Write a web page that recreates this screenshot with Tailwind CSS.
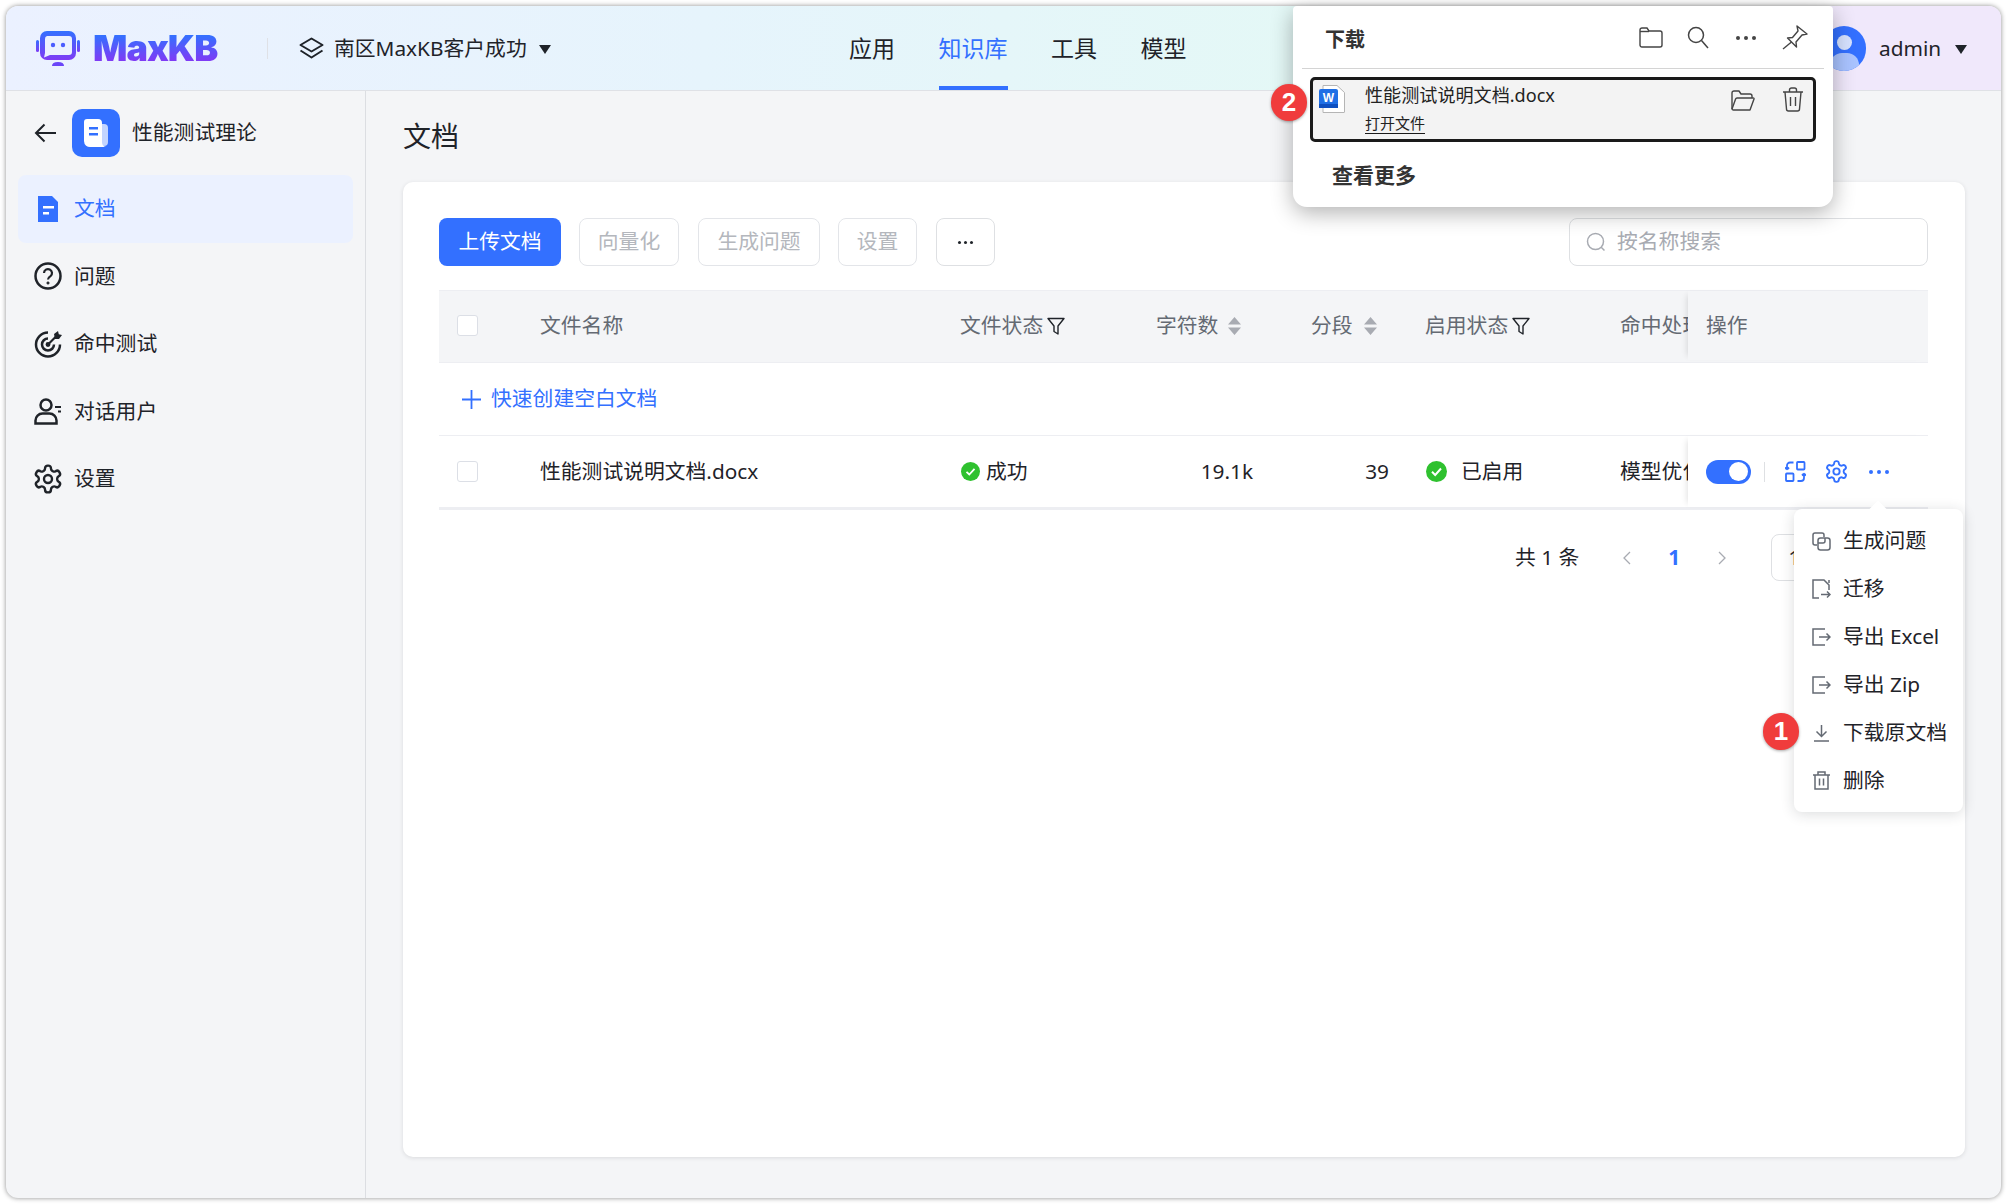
<!DOCTYPE html>
<html lang="zh-CN">
<head>
    <meta charset="UTF-8">
    <title>MaxKB 文档</title>
    <script src="https://cdn.jsdelivr.net/npm/@tailwindcss/browser@4"></script>
</head>
<body class="bg-white font-['Noto_Sans','Noto_Sans_CJK_SC',sans-serif] text-[20.8px] text-[#1f2329]">
<div class="relative w-[2007px] h-[1204px] p-[6px] overflow-hidden">

    <!-- Window -->
    <div class="flex flex-col h-full rounded-[12px] overflow-hidden bg-[#f4f5f7] shadow-[0_0_5px_rgba(0,0,0,0.45)]">

        <!-- Header -->
        <header class="relative flex items-center shrink-0 h-[85px] border-b border-[#dfe1e6] bg-[linear-gradient(90deg,#ebf1ff_0%,#e6f4fc_35%,#e4f8f6_65%,#e9f1f7_78%,#f0e8fb_92%,#f0e8fb_100%)]">
            <svg class="ml-[30px] w-[44px] h-[35px]" viewBox="0 0 44 35">
                <defs>
                    <linearGradient id="logoGrad" x1="0" y1="0" x2="0" y2="1">
                        <stop offset="0" stop-color="#3370ff"/>
                        <stop offset="1" stop-color="#7f3bf5"/>
                    </linearGradient>
                </defs>
                <rect x="0" y="9" width="3" height="12" rx="1.5" fill="url(#logoGrad)"/>
                <rect x="41" y="9" width="3" height="12" rx="1.5" fill="url(#logoGrad)"/>
                <rect x="4" y="0" width="36" height="29" rx="7" fill="url(#logoGrad)"/>
                <path d="M11 5h22a3 3 0 0 1 3 3v13a3 3 0 0 1-3 3H14l-6 2.5 1-4.5V8a3 3 0 0 1 2-3z" fill="#ebf1ff"/>
                <circle cx="17" cy="14" r="2.2" fill="#4a5cff"/>
                <circle cx="27" cy="14" r="2.2" fill="#4a5cff"/>
                <path d="M16 35q0-4 6-4t6 4z" fill="#6a45f8"/>
            </svg>
            <span class="ml-[13px] w-[126px] font-['Inter',sans-serif] text-[36px] font-black leading-none tracking-[-1px] bg-[linear-gradient(180deg,#3370ff_15%,#7f3bf5_85%)] bg-clip-text text-transparent">MaxKB</span>
            <span class="ml-[48px] w-px h-[21px] bg-[#dfe1e6]"></span>
            <svg class="ml-[31px] w-[25px] h-[22px]" viewBox="0 0 25 22" fill="none" stroke="#1f2329" stroke-width="2" stroke-linejoin="round">
                <path d="M12.5 1.5 23.5 8 12.5 14.5 1.5 8z"/>
                <path d="M1.5 13.5 12.5 20.5 23.5 13.5"/>
            </svg>
            <span class="ml-[10px] mt-[2px] w-[195px] whitespace-nowrap">南区MaxKB客户成功</span>
            <span class="ml-[10px] mt-[2px] w-0 h-0 border-x-[6.5px] border-x-transparent border-t-[9px] border-t-[#1f2329]"></span>

            <nav class="absolute left-[843px] top-0 h-full flex gap-[43.5px] text-[23px]">
                <a class="flex items-center">应用</a>
                <a class="flex items-center text-[#3370ff] border-b-[4px] border-[#3370ff] pt-[4px]">知识库</a>
                <a class="flex items-center">工具</a>
                <a class="flex items-center">模型</a>
            </nav>

            <div class="absolute left-[1816px] top-[20px] w-[44px] h-[45px] rounded-full bg-[#3370ff] overflow-hidden">
                <span class="absolute left-[15px] top-[9px] w-[15px] h-[15px] rounded-full bg-[#d6e2ff]"></span>
                <span class="absolute left-[8px] top-[27px] w-[29px] h-[22px] rounded-t-[12px] bg-[#a9c3ff]"></span>
            </div>
            <span class="absolute left-[1873px] top-[27px]">admin</span>
            <span class="absolute left-[1949px] top-[39px] w-0 h-0 border-x-[6.5px] border-x-transparent border-t-[9px] border-t-[#1f2329]"></span>
        </header>

        <div class="flex flex-1 min-h-0">

            <!-- Sidebar -->
            <aside class="w-[360px] shrink-0 border-r border-[#dcdee2] pt-[18px]">
                <div class="flex items-center h-[48px]">
                    <svg class="ml-[28px] w-[23px] h-[20px]" viewBox="0 0 23 20" fill="none" stroke="#1f2329" stroke-width="2">
                        <path d="M22 10H2M10.500 1.500 2 10l8.500 8.500"/>
                    </svg>
                    <div class="ml-[15px] flex items-center justify-center w-[48px] h-[48px] rounded-[10px] bg-[#3370ff]">
                        <svg class="w-[26px] h-[30px]" viewBox="0 0 26 30">
                            <path d="M16 6h5a4 4 0 0 1 4 4v14a4 4 0 0 1-4 4h-5z" fill="#c3d5ff"/>
                            <path d="M4 1h11a4 4 0 0 1 4 4v19a5 5 0 0 0 4 5H8a6 6 0 0 1-7-6V4a3 3 0 0 1 3-3z" fill="#fff"/>
                            <rect x="6" y="9" width="9" height="2.500" fill="#3370ff"/>
                            <rect x="6" y="15" width="9" height="2.500" fill="#3370ff"/>
                        </svg>
                    </div>
                    <span class="ml-[12px]">性能测试理论</span>
                </div>

                <nav class="mt-[18px] ml-[12px] w-[335px]">
                    <a class="flex items-center h-[67.5px] pl-[16px] rounded-[8px] bg-[#ebf1ff] text-[#3370ff]">
                        <svg class="w-[28px] h-[26px]" viewBox="0 0 28 26">
                            <path d="M4 0h14l6 6v20H4z" fill="#3370ff"/>
                            <rect x="9" y="10" width="11" height="2.500" fill="#fff"/>
                            <rect x="9" y="16" width="6" height="2.500" fill="#fff"/>
                        </svg>
                        <span class="ml-[12px]">文档</span>
                    </a>
                    <a class="flex items-center h-[67.500px] pl-[16px]">
                        <svg class="w-[28px] h-[28px]" viewBox="0 0 28 28" fill="none" stroke="#1f2329" stroke-width="2.500">
                            <circle cx="14" cy="14" r="12.500"/>
                            <path d="M10 11a4 4 0 1 1 6.500 3.200c-1.500 1-2.500 1.800-2.500 3.300" stroke-width="2.200"/>
                            <circle cx="14" cy="21" r="1.100" fill="#1f2329" stroke-width="1"/>
                        </svg>
                        <span class="ml-[12px]">问题</span>
                    </a>
                    <a class="flex items-center h-[67.500px] pl-[16px]">
                        <svg class="w-[28px] h-[28px]" viewBox="0 0 28 28" fill="none" stroke="#1f2329" stroke-width="2.500">
                            <path d="M14 2.500A12 12 0 1 0 26 14.500"/>
                            <path d="M14 8.500a6 6 0 1 0 6 6"/>
                            <circle cx="14" cy="14.500" r="1.200" fill="#1f2329"/>
                            <path d="M14 14.500 23 5.500" stroke-width="2.200"/>
                            <path d="M20 4l4-3 .8 3.200L28 5l-3 4h-4z" fill="#1f2329" stroke="none"/>
                        </svg>
                        <span class="ml-[12px]">命中测试</span>
                    </a>
                    <a class="flex items-center h-[67.500px] pl-[16px]">
                        <svg class="w-[28px] h-[27px]" viewBox="0 0 28 27" fill="none" stroke="#1f2329" stroke-width="2.500">
                            <circle cx="12" cy="7" r="5.500"/>
                            <path d="M1.500 25.500v-3a7 7 0 0 1 7-7h7a7 7 0 0 1 7 7v3z"/>
                            <path d="M21 9h6M24 13.500h3" stroke-width="2"/>
                        </svg>
                        <span class="ml-[12px]">对话用户</span>
                    </a>
                    <a class="flex items-center h-[67.500px] pl-[16px]">
                        <svg class="w-[32px] h-[32px] -mx-[2px]" viewBox="0 0 24 24" fill="none" stroke="#1f2329" stroke-width="1.800">
                            <path d="M12.220 2h-.44a2 2 0 0 0-2 2v.18a2 2 0 0 1-1 1.730l-.43.25a2 2 0 0 1-2 0l-.15-.08a2 2 0 0 0-2.730.73l-.22.38a2 2 0 0 0 .73 2.730l.15.1a2 2 0 0 1 1 1.720v.51a2 2 0 0 1-1 1.740l-.15.09a2 2 0 0 0-.73 2.730l.22.38a2 2 0 0 0 2.730.73l.15-.08a2 2 0 0 1 2 0l.43.25a2 2 0 0 1 1 1.730V20a2 2 0 0 0 2 2h.44a2 2 0 0 0 2-2v-.18a2 2 0 0 1 1-1.730l.43-.25a2 2 0 0 1 2 0l.15.08a2 2 0 0 0 2.730-.73l.22-.39a2 2 0 0 0-.73-2.730l-.15-.08a2 2 0 0 1-1-1.740v-.5a2 2 0 0 1 1-1.740l.15-.09a2 2 0 0 0 .73-2.730l-.22-.38a2 2 0 0 0-2.730-.73l-.15.08a2 2 0 0 1-2 0l-.43-.25a2 2 0 0 1-1-1.730V4a2 2 0 0 0-2-2z"/>
                            <circle cx="12" cy="12" r="3"/>
                        </svg>
                        <span class="ml-[12px]">设置</span>
                    </a>
                </nav>
            </aside>

            <!-- Main -->
            <main class="flex flex-col flex-1 min-w-0 pt-[23px] pl-[37px] pr-[36px] pb-[41px]">
                <h1 class="h-[44px] mb-[24px] flex items-center text-[28px]">文档</h1>

                <section class="flex-1 rounded-[10px] bg-white pl-[36px] pr-[37px] pt-[36px] shadow-[0_1px_4px_rgba(31,35,41,0.12)]">
                    <!-- Toolbar -->
                    <div class="flex items-center gap-[18px]">
                        <button class="w-[122px] h-[48px] rounded-[8px] bg-[#3370ff] text-white">上传文档</button>
                        <button class="w-[100px] h-[48px] rounded-[8px] border border-[#e3e5e9] text-[#b4b7bd]">向量化</button>
                        <button class="ml-px w-[122px] h-[48px] rounded-[8px] border border-[#e3e5e9] text-[#b4b7bd]">生成问题</button>
                        <button class="w-[79px] h-[48px] rounded-[8px] border border-[#e3e5e9] text-[#b4b7bd]">设置</button>
                        <button class="ml-px flex items-center justify-center gap-[3px] w-[59px] h-[48px] rounded-[8px] border border-[#dee0e3]">
                            <i class="w-[3px] h-[3px] rounded-full bg-[#1f2329]"></i><i class="w-[3px] h-[3px] rounded-full bg-[#1f2329]"></i><i class="w-[3px] h-[3px] rounded-full bg-[#1f2329]"></i>
                        </button>
                        <div class="ml-auto flex items-center w-[359px] h-[48px] rounded-[8px] border border-[#dee0e3] pl-[16px] text-[#a8abb2]">
                            <svg class="w-[20px] h-[20px]" viewBox="0 0 20 20" fill="none" stroke="#a8abb2" stroke-width="1.500">
                                <circle cx="9.500" cy="9.500" r="8"/><path d="M15 15l3.500 3.500"/>
                            </svg>
                            <span class="ml-[11px]">按名称搜索</span>
                        </div>
                    </div>

                    <!-- Table -->
                    <div class="mt-[24px] text-[#646a73]">
                        <div class="grid grid-cols-[101px_420px_196px_155px_114px_195px_68px_240px] items-center h-[73px] pb-[2px] border-y border-[#edeef2] bg-[#f4f5f7]">
                            <span class="ml-[18px] w-[21px] h-[21px] rounded-[3px] border border-[#dcdfe6] bg-white"></span>
                            <span>文件名称</span>
                            <span class="flex items-center gap-[4px]">文件状态
                                <svg class="w-[18px] h-[18px]" viewBox="0 0 18 18" fill="none" stroke="#1f2329" stroke-width="1.400" stroke-linejoin="round"><path d="M1 1.500h16l-6 7.500v8l-4-2.500V9z"/></svg>
                            </span>
                            <span class="flex items-center gap-[10px]">字符数
                                <svg class="w-[13px] h-[20px]" viewBox="0 0 13 20" fill="#a8abb2"><path d="M6.500 1 13 8.500H0zM6.500 19 0 11.500h13z"/></svg>
                            </span>
                            <span class="flex items-center gap-[11px]">分段
                                <svg class="w-[13px] h-[20px]" viewBox="0 0 13 20" fill="#a8abb2"><path d="M6.500 1 13 8.500H0zM6.500 19 0 11.500h13z"/></svg>
                            </span>
                            <span class="flex items-center gap-[4px]">启用状态
                                <svg class="w-[18px] h-[18px]" viewBox="0 0 18 18" fill="none" stroke="#1f2329" stroke-width="1.400" stroke-linejoin="round"><path d="M1 1.500h16l-6 7.500v8l-4-2.500V9z"/></svg>
                            </span>
                            <span class="overflow-hidden whitespace-nowrap">命中处理方式</span>
                            <span class="flex items-center self-stretch pl-[18px] bg-[#f4f5f7] shadow-[-5px_0_6px_-4px_rgba(0,0,0,0.12)]">操作</span>
                        </div>

                        <div class="flex items-center h-[73px] border-b border-[#edeef2] pl-[23px] text-[#3370ff]">
                            <svg class="w-[19px] h-[19px]" viewBox="0 0 19 19" fill="none" stroke="#3370ff" stroke-width="1.800"><path d="M9.500 0v19M0 9.500h19"/></svg>
                            <span class="ml-[10px]">快速创建空白文档</span>
                        </div>

                        <div class="grid grid-cols-[101px_420px_196px_155px_114px_195px_68px_240px] items-center h-[74px] border-b-[3px] border-[#edeef2] text-[#1f2329]">
                            <span class="ml-[18px] w-[21px] h-[21px] rounded-[3px] border border-[#dcdfe6] bg-white"></span>
                            <span class="whitespace-nowrap">性能测试说明文档.docx</span>
                            <span class="flex items-center gap-[6px]">
                                <svg class="w-[19px] h-[19px] ml-px" viewBox="0 0 19 19"><circle cx="9.500" cy="9.500" r="9.500" fill="#2fc12f"/><path d="M5.500 9.800 8.300 12.500 13.500 6.800" fill="none" stroke="#fff" stroke-width="1.800"/></svg>
                                成功
                            </span>
                            <span class="pr-[58px] text-right">19.1k</span>
                            <span class="pr-[36px] text-right">39</span>
                            <span class="flex items-center">
                                <svg class="w-[21px] h-[21px] ml-px" viewBox="0 0 21 21"><circle cx="10.500" cy="10.500" r="10.500" fill="#2fc12f"/><path d="M6 10.800 9.200 14 15 7.500" fill="none" stroke="#fff" stroke-width="2"/></svg>
                                <span class="ml-[14px]">已启用</span>
                            </span>
                            <span class="overflow-hidden whitespace-nowrap">模型优化</span>
                            <div class="flex items-center self-stretch pl-[18px] bg-white shadow-[-5px_0_6px_-4px_rgba(0,0,0,0.12)]">
                                <span class="flex items-center justify-end w-[45px] h-[24px] pr-[3px] rounded-full bg-[#3370ff]"><i class="w-[19px] h-[19px] rounded-full bg-white"></i></span>
                                <span class="ml-[13px] w-px h-[20px] bg-[#dee0e3]"></span>
                                <svg class="ml-[20px] w-[21px] h-[21px]" viewBox="0 0 21 21" fill="none" stroke="#3370ff" stroke-width="1.800">
                                    <rect x="12" y="1" width="7.500" height="7.500" rx=".8"/>
                                    <rect x="1" y="12.500" width="7.500" height="7.500" rx=".8"/>
                                    <path d="M8.500 1.500H5a3 3 0 0 0-3 3v4M2 8.500 0 6.500M2 8.500l2-2"/>
                                    <path d="M12.500 20H16a3 3 0 0 0 3-3v-4.500M19 12.500l-2 2M19 12.500l2 2"/>
                                </svg>
                                <svg class="ml-[18px] w-[25px] h-[25px]" viewBox="0 0 24 24" fill="none" stroke="#3370ff" stroke-width="1.800">
                                    <path d="M12.220 2h-.44a2 2 0 0 0-2 2v.18a2 2 0 0 1-1 1.730l-.43.25a2 2 0 0 1-2 0l-.15-.08a2 2 0 0 0-2.730.73l-.22.38a2 2 0 0 0 .73 2.730l.15.1a2 2 0 0 1 1 1.720v.51a2 2 0 0 1-1 1.740l-.15.09a2 2 0 0 0-.73 2.730l.22.38a2 2 0 0 0 2.730.73l.15-.08a2 2 0 0 1 2 0l.43.25a2 2 0 0 1 1 1.730V20a2 2 0 0 0 2 2h.44a2 2 0 0 0 2-2v-.18a2 2 0 0 1 1-1.730l.43-.25a2 2 0 0 1 2 0l.15.08a2 2 0 0 0 2.730-.73l.22-.39a2 2 0 0 0-.73-2.730l-.15-.08a2 2 0 0 1-1-1.740v-.5a2 2 0 0 1 1-1.740l.15-.09a2 2 0 0 0 .73-2.730l-.22-.38a2 2 0 0 0-2.730-.73l-.15.08a2 2 0 0 1-2 0l-.43-.25a2 2 0 0 1-1-1.730V4a2 2 0 0 0-2-2z"/>
                                    <circle cx="12" cy="12" r="3"/>
                                </svg>
                                <span class="ml-[20px] flex gap-[4px]"><i class="w-[4px] h-[4px] rounded-full bg-[#3370ff]"></i><i class="w-[4px] h-[4px] rounded-full bg-[#3370ff]"></i><i class="w-[4px] h-[4px] rounded-full bg-[#3370ff]"></i></span>
                            </div>
                        </div>
                    </div>

                    <!-- Pagination -->
                    <div class="flex items-center mt-[24px] h-[47px] text-[#1f2329]">
                        <span class="ml-[1076px] whitespace-nowrap">共 1 条</span>
                        <svg class="ml-[43px] w-[9px] h-[14px]" viewBox="0 0 9 14" fill="none" stroke="#a8abb2" stroke-width="1.300"><path d="M8 1 2 7l6 6"/></svg>
                        <span class="ml-[37px] font-bold text-[#3370ff]">1</span>
                        <svg class="ml-[38px] w-[9px] h-[14px]" viewBox="0 0 9 14" fill="none" stroke="#a8abb2" stroke-width="1.300"><path d="M1 1l6 6-6 6"/></svg>
                        <span class="ml-[44px] flex items-center w-[120px] h-[47px] rounded-[8px] border border-[#dee0e3] pl-[16px] whitespace-nowrap">10 条/页</span>
                    </div>
                </section>
            </main>
        </div>
    </div>

    <!-- Browser download flyout -->
    <div class="absolute left-[1293px] top-[6px] w-[540px] h-[201px] rounded-b-[14px] rounded-t-[4px] bg-white text-[#333] shadow-[0_6px_22px_rgba(0,0,0,0.3)]">
        <div class="flex items-center h-[62px] pl-[32px] pr-[25px]">
            <span class="mt-[6px] font-bold text-[20px]">下载</span>
            <svg class="ml-auto mt-[1px] w-[24px] h-[21px]" viewBox="0 0 24 21" fill="none" stroke="#444" stroke-width="1.400"><path d="M1 3a2 2 0 0 1 2-2h5l2 3h11a2 2 0 0 1 2 2v12a2 2 0 0 1-2 2H3a2 2 0 0 1-2-2z"/><path d="M1 4.500h9"/></svg>
            <svg class="ml-[24px] mt-[1px] w-[22px] h-[23px]" viewBox="0 0 22 23" fill="none" stroke="#444" stroke-width="1.500"><circle cx="9" cy="9" r="7.500"/><path d="M14.500 14.500 21 22"/></svg>
            <span class="ml-[27px] mt-[1px] flex gap-[4px]"><i class="w-[4px] h-[4px] rounded-full bg-[#444]"></i><i class="w-[4px] h-[4px] rounded-full bg-[#444]"></i><i class="w-[4px] h-[4px] rounded-full bg-[#444]"></i></span>
            <svg class="ml-[26px] mt-[1px] w-[26px] h-[25px]" viewBox="0 0 26 25" fill="none" stroke="#444" stroke-width="1.400" stroke-linejoin="round"><path d="M15 1l10 8-5 1-6 7 .5 5-9-9 5-.5 5.500-6.500z"/><path d="M9.500 17 1 24"/></svg>
        </div>
        <div class="mx-[9px] border-t border-[#d4d4d4]"></div>
        <div class="flex items-start mx-[17px] mt-[8px] h-[65px] rounded-[5px] border-[3px] border-[#1a1a1a] bg-[#f3f3f3]">
            <svg class="ml-[6px] mt-[5px] w-[26px] h-[28px] shrink-0" viewBox="0 0 26 28">
                <path d="M4 .5h14l7.500 7V27a.5.5 0 0 1-.5.500H4z" fill="#fff" stroke="#b5b5b5"/>
                <rect x="0" y="4" width="19" height="19" rx="2" fill="#1f6fe5"/>
                <rect x="0" y="19" width="19" height="4" fill="#0e4fc0"/>
                <text x="9.500" y="17" text-anchor="middle" font-family="Liberation Sans, sans-serif" font-size="12" font-weight="700" fill="#fff">W</text>
            </svg>
            <div class="ml-[20px] flex flex-col items-start">
                <span class="h-[31px] leading-[31px] text-[18.1px] text-[#222] whitespace-nowrap">性能测试说明文档.docx</span>
                <span class="mt-[2px] h-[21px] leading-[20px] text-[15px] text-[#222] border-b border-[#1a1a1a]">打开文件</span>
            </div>
            <svg class="ml-auto mt-[10px] w-[25px] h-[21px]" viewBox="0 0 25 21" fill="none" stroke="#444" stroke-width="1.400" stroke-linejoin="round"><path d="M2 19V3a2 2 0 0 1 2-2h5l2 3h9a2 2 0 0 1 2 2v2"/><path d="M2 19a1.500 1.500 0 0 0 1.500 1H20l4-11a.8.8 0 0 0-.8-1H7a1.500 1.500 0 0 0-1.400 1z"/></svg>
            <svg class="ml-[27px] mr-[9px] mt-[7px] w-[22px] h-[25px] shrink-0" viewBox="0 0 22 25" fill="none" stroke="#444" stroke-width="1.400" stroke-linejoin="round"><path d="M1 5h20M7.500 5V3a2 2 0 0 1 2-2h3a2 2 0 0 1 2 2v2"/><path d="M3 5l1.500 17a2 2 0 0 0 2 2h9a2 2 0 0 0 2-2L19 5"/><path d="M8.500 10v9M13.500 10v9"/></svg>
        </div>
        <div class="mt-[18px] ml-[39px] font-bold text-[21px]">查看更多</div>
    </div>
    <span class="absolute left-[1271px] top-[84px] flex items-center justify-center w-[36px] h-[37px] rounded-full bg-[#f03c3c] text-white font-['Liberation_Sans',sans-serif] text-[26px] font-bold shadow-[0_1px_3px_rgba(0,0,0,0.35)]">2</span>

    <!-- Row action menu -->
    <div class="absolute left-[1794px] top-[509px] w-[169px] h-[303px] pt-[8px] rounded-[8px] bg-white shadow-[0_2px_14px_rgba(31,35,41,0.16)]">
        <i class="absolute left-[78px] -top-[6px] w-[12px] h-[12px] rotate-45 bg-white"></i>
        <a class="relative flex items-center h-[48px] pl-[18px]">
            <svg class="w-[19px] h-[19px]" viewBox="0 0 19 19" fill="none" stroke="#646a73" stroke-width="1.500"><path d="M5 13H3a2 2 0 0 1-2-2V3a2 2 0 0 1 2-2h7a2 2 0 0 1 2 2v2"/><rect x="6" y="6" width="12" height="12" rx="2.500"/><path d="M6 11h5a2 2 0 0 0 2-2V6"/></svg>
            <span class="ml-[12px] whitespace-nowrap">生成问题</span>
        </a>
        <a class="flex items-center h-[48px] pl-[18px]">
            <svg class="w-[19px] h-[20px]" viewBox="0 0 19 20" fill="none" stroke="#646a73" stroke-width="1.500"><path d="M7 19H1V1h11l5 5v5"/><path d="M17 1v3"/><path d="M9 15.500h9M15 12.500l3 3-3 3"/></svg>
            <span class="ml-[12px] whitespace-nowrap">迁移</span>
        </a>
        <a class="flex items-center h-[47.5px] pl-[18px]">
            <svg class="w-[19px] h-[18px]" viewBox="0 0 19 18" fill="none" stroke="#646a73" stroke-width="1.500"><path d="M13 1H1v16h12"/><path d="M7 9h11M14.500 5.500 18 9l-3.500 3.500"/></svg>
            <span class="ml-[12px] whitespace-nowrap">导出 Excel</span>
        </a>
        <a class="flex items-center h-[48px] pl-[18px]">
            <svg class="w-[19px] h-[18px]" viewBox="0 0 19 18" fill="none" stroke="#646a73" stroke-width="1.500"><path d="M13 1H1v16h12"/><path d="M7 9h11M14.500 5.500 18 9l-3.500 3.500"/></svg>
            <span class="ml-[12px] whitespace-nowrap">导出 Zip</span>
        </a>
        <a class="flex items-center h-[48px] pl-[18px]">
            <svg class="w-[19px] h-[18px]" viewBox="0 0 19 18" fill="none" stroke="#646a73" stroke-width="1.500"><path d="M9.500 1v11M4.500 7.500l5 5 5-5M2 17h15"/></svg>
            <span class="ml-[12px] whitespace-nowrap">下载原文档</span>
        </a>
        <a class="flex items-center h-[48px] pl-[18px]">
            <svg class="w-[19px] h-[19px]" viewBox="0 0 19 19" fill="none" stroke="#646a73" stroke-width="1.500"><path d="M1 4h17M6 4V1h7v3"/><path d="M3 4v14h13V4"/><path d="M7.500 7.500v7M11.500 7.500v7"/></svg>
            <span class="ml-[12px] whitespace-nowrap">删除</span>
        </a>
    </div>
    <span class="absolute left-[1763px] top-[713px] flex items-center justify-center w-[36px] h-[37px] rounded-full bg-[#f03c3c] text-white font-['Liberation_Sans',sans-serif] text-[26px] font-bold shadow-[0_1px_3px_rgba(0,0,0,0.35)]">1</span>
</div>
</body>
</html>
